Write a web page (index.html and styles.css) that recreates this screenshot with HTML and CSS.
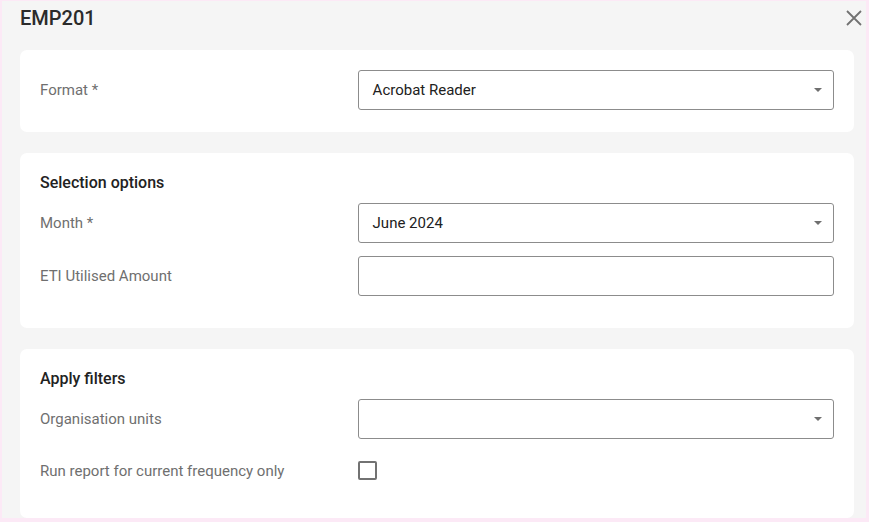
FILE: index.html
```html
<!DOCTYPE html>
<html lang="en">
<head>
<meta charset="utf-8">
<title>EMP201</title>
<link rel="stylesheet" href="styles.css">
</head>
<body>
<div class="dialog">
  <header class="dialog-header">
    <h1 class="dialog-title">EMP201</h1>
    <button class="close-btn" aria-label="Close">
      <svg width="18" height="18" viewBox="0 0 18 18"><path d="M2 2 L16 16 M16 2 L2 16" stroke="#727272" stroke-width="1.8" fill="none"/></svg>
    </button>
  </header>

  <section class="card card-format">
    <div class="row">
      <label class="label">Format *</label>
      <div class="select">
        <span class="select-value">Acrobat Reader</span>
        <span class="arrow"></span>
      </div>
    </div>
  </section>

  <section class="card card-selection">
    <h2 class="card-heading">Selection options</h2>
    <div class="rows">
      <div class="row">
        <label class="label">Month *</label>
        <div class="select">
          <span class="select-value">June 2024</span>
          <span class="arrow"></span>
        </div>
      </div>
      <div class="row">
        <label class="label">ETI Utilised Amount</label>
        <div class="input"></div>
      </div>
    </div>
  </section>

  <section class="card card-filters">
    <h2 class="card-heading">Apply filters</h2>
    <div class="rows">
      <div class="row">
        <label class="label">Organisation units</label>
        <div class="select">
          <span class="select-value"></span>
          <span class="arrow"></span>
        </div>
      </div>
      <div class="row row-check">
        <label class="label">Run report for current frequency only</label>
        <div><span class="checkbox"></span></div>
      </div>
    </div>
  </section>
</div>
</body>
</html>
```

FILE: styles.css
```css
* { box-sizing: border-box; }

html, body {
  margin: 0;
  padding: 0;
  height: 100%;
}

body {
  font-family: Roboto, "Noto Sans", "Liberation Sans", sans-serif;
  background: #fce9f6;
}

.dialog {
  height: 522px;
  background: #f5f5f5;
  border-style: solid;
  border-color: #fce9f6;
  border-width: 1px 3px 4px 2px;
  padding: 0 12px 0 18px;
  display: flex;
  flex-direction: column;
}

.dialog-header {
  height: 49px;
  display: flex;
  justify-content: space-between;
  align-items: flex-start;
}

.dialog-title {
  margin: 0;
  padding-top: 5px;
  font-size: 20px;
  line-height: 24px;
  font-weight: 500;
  color: #2b2b2b;
}

.close-btn {
  border: 0;
  background: none;
  padding: 0;
  margin: 8px -9px 0 0;
  width: 18px;
  height: 18px;
  cursor: pointer;
}

.close-btn svg { display: block; }

.card {
  background: #ffffff;
  border-radius: 7px;
  padding: 20px 20px 32px;
}

.card-format { padding-bottom: 22px; }

.card-selection { margin-top: 21px; }

.card-filters { margin-top: 21px; padding-bottom: 29px; }

.card-heading {
  margin: 0 0 10px;
  font-size: 16px;
  line-height: 20px;
  font-weight: 500;
  color: #222222;
}

.rows {
  display: flex;
  flex-direction: column;
  gap: 13px;
}

.row {
  display: grid;
  grid-template-columns: 2fr 3fr;
  align-items: center;
  min-height: 40px;
}

.row-check { min-height: 37px; }

.label {
  font-size: 15px;
  color: #6f6f6f;
}

.select, .input {
  height: 40px;
  border: 1px solid #8c8c8c;
  border-radius: 3px;
  background: #fff;
  display: flex;
  align-items: center;
  padding: 0 11px 0 14px;
}

.select-value {
  flex: 1;
  font-size: 15px;
  color: #212121;
}

.arrow {
  width: 0;
  height: 0;
  border-left: 4px solid transparent;
  border-right: 4px solid transparent;
  border-top: 4px solid #6f6f6f;
}

.checkbox {
  display: block;
  width: 19px;
  height: 19px;
  border: 2px solid #727272;
  border-radius: 2px;
}
```
